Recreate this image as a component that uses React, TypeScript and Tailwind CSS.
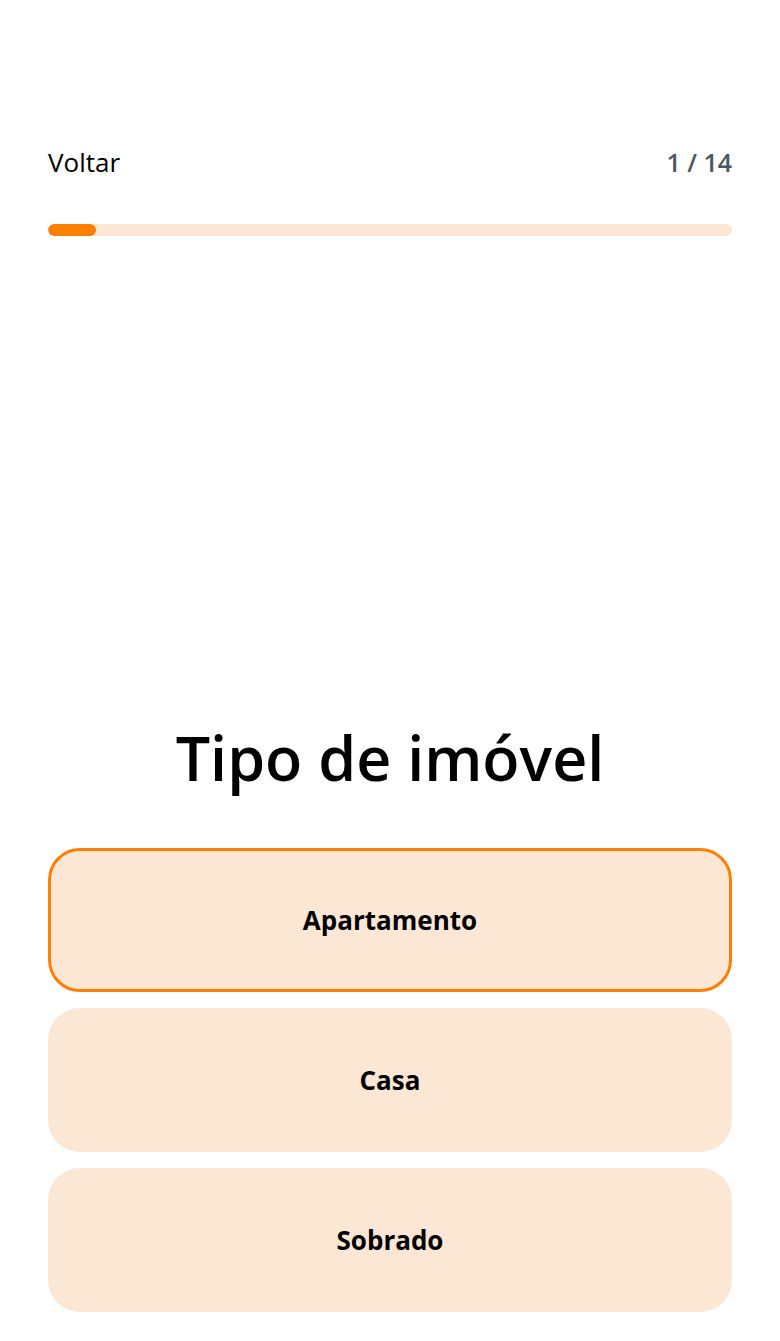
import React from "react";

export default function App() {
  const options = ["Apartamento", "Casa", "Sobrado"];
  const selected = 0;
  return (
    <div
      className="min-h-[1341px] bg-white flex flex-col px-12 pt-[146px] pb-[29px] text-black"
      style={{ fontFamily: '"Open Sans", "Noto Sans", sans-serif' }}
    >
      <div className="flex items-center justify-between h-8">
        <button className="text-[26px] leading-8 text-black">Voltar</button>
        <span className="text-[25px] leading-8 font-semibold text-[#4b5563]">1 / 14</span>
      </div>
      <div className="mt-[46px] h-3 w-full rounded-full bg-[#fce7d4] overflow-hidden">
        <div className="h-3 w-[48px] rounded-full bg-[#ff7f00]" />
      </div>
      <div className="flex-1" />
      <h1 className="text-center text-[61px] leading-[80px] font-semibold mb-[50px]">Tipo de imóvel</h1>
      <div className="flex flex-col gap-4">
        {options.map((o, i) => (
          <button
            key={o}
            className={
              i === selected
                ? "h-[144px] rounded-[32px] bg-[#fce7d4] border-[3px] border-[#ff7f00] text-[26px] font-bold"
                : "h-[144px] rounded-[32px] bg-[#fce7d4] border-[3px] border-transparent text-[26px] font-bold"
            }
          >
            {o}
          </button>
        ))}
      </div>
    </div>
  );
}
